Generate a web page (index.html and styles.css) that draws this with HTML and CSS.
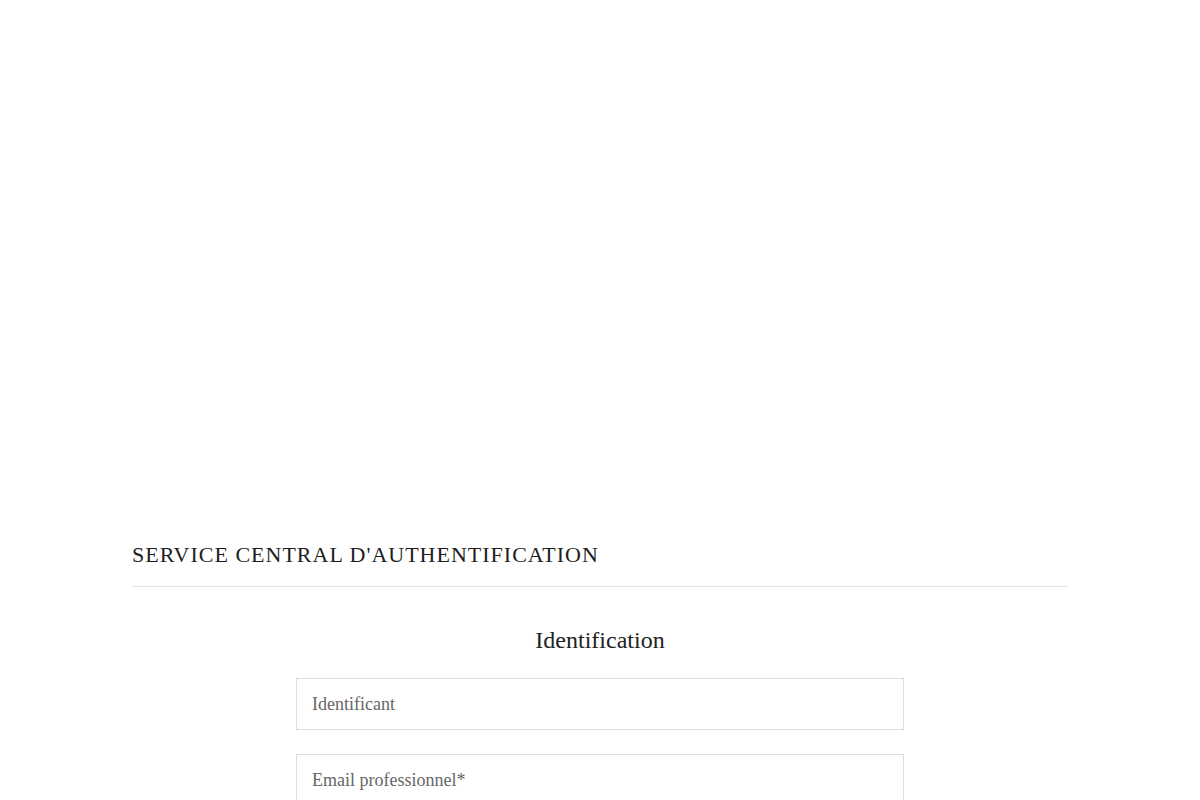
FILE: index.html
```html
<!DOCTYPE html>
<html lang="fr">
<head>
<meta charset="utf-8">
<title>Service Central d'Authentification</title>
<link rel="stylesheet" href="styles.css">
</head>
<body>
<div class="page">
  <div class="logo-space"></div>
  <header class="site-header">
    <h1 class="site-title">SERVICE CENTRAL D'AUTHENTIFICATION</h1>
  </header>
  <main class="login">
    <h2 class="login-title">Identification</h2>
    <form class="login-form">
      <input class="field" type="text" placeholder="Identificant">
      <input class="field" type="email" placeholder="Email professionnel*">
    </form>
  </main>
</div>
</body>
</html>
```
FILE: styles.css
```css
html, body {
  margin: 0;
  padding: 0;
  background: #fff;
}
body {
  font-family: "Liberation Serif", "Times New Roman", serif;
  color: #222;
}
.page {
  width: 936px;
  margin: 0 auto;
}
.logo-space {
  height: 541px;
}
.site-header {
  border-bottom: 1px solid #e2e2e2;
  padding-bottom: 17px;
}
.site-title {
  margin: 0;
  font-size: 22px;
  font-weight: normal;
  letter-spacing: 1px;
  line-height: 28px;
  color: #1e1e1e;
}
.login {
  display: flex;
  flex-direction: column;
  align-items: center;
}
.login-title {
  margin: 38px 0 23px;
  font-size: 24px;
  font-weight: normal;
  line-height: 30px;
  color: #222;
}
.login-form {
  display: flex;
  flex-direction: column;
  gap: 24px;
  width: 608px;
}
.field {
  box-sizing: border-box;
  width: 100%;
  height: 52px;
  margin: 0;
  padding: 0 15px;
  border: 1px solid #dedede;
  border-radius: 0;
  font-family: "Liberation Serif", "Times New Roman", serif;
  font-size: 18px;
  color: #333;
  background: #fff;
  outline: none;
}
.field::placeholder {
  color: #666;
}
```
